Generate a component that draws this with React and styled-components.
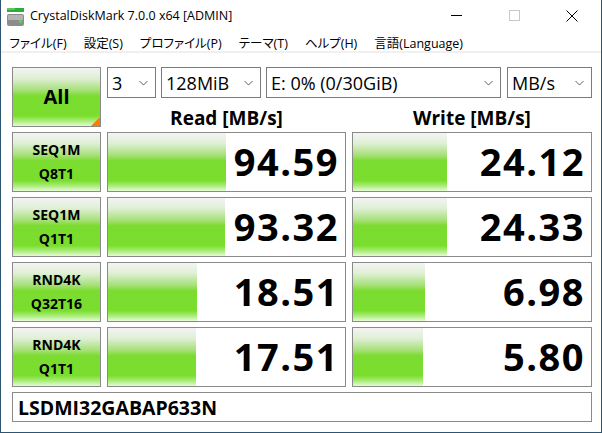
import React from 'react'
import styled, { createGlobalStyle } from 'styled-components'

const GlobalStyle = createGlobalStyle`
    html, body {
        margin:0;
        padding:0;
        background:#ffffff;
        overflow:hidden;
    }
`

const UI = `"Open Sans", "Noto Sans", "Noto Sans CJK JP", sans-serif`

const GREEN = `linear-gradient(to bottom,
    #f4f4f4 0%,
    #dfefd4 18%,
    #a8e07a 38%,
    #7bdc30 48%,
    #7ade2e 82%,
    #a9ec78 91%,
    #e6fad6 100%)`

// Styled Components
const Window = styled.div`
    box-sizing:border-box;
    width:602px;
    height:433px;
    display:flex;
    flex-direction:column;
    background:#ffffff;
    border:1px solid #2b5573;
    border-top:none;
`
const TitleBar = styled.div`
    height:31px;
    display:flex;
    align-items:center;
    padding-left:4px;
    font-family:${UI};
    font-size:12.5px;
    color:#000;
`
const Title = styled.span`
    margin-left:5px;
    flex:1;
`
const Control = styled.div`
    width:58px;
    height:31px;
    display:flex;
    align-items:center;
    justify-content:center;
`
const MenuBar = styled.div`
    box-sizing:border-box;
    height:22px;
    padding-top:3px;
    display:flex;
    align-items:center;
    font-family:${UI};
    font-size:12.5px;
    font-feature-settings:"palt";
    color:#000;
    border-bottom:2px solid #f0f0f0;
`
const MenuItem = styled.span`
    padding:0 8.5px;
`
const Client = styled.div`
    flex:1;
    display:grid;
    grid-template-columns:89px 239px 240px;
    grid-auto-rows:60px;
    column-gap:6px;
    row-gap:5px;
    padding:14px 9px 0 11px;
    font-family:${UI};
`
const GreenButton = styled.div`
    box-sizing:border-box;
    position:relative;
    border:1px solid #8a8a8a;
    background:${GREEN};
    display:flex;
    flex-direction:column;
    align-items:center;
    justify-content:center;
    font-weight:700;
    font-size:${p => p.$big ? 20 : 14}px;
    line-height:${p => p.$big ? 1 : 1.75};
    color:#000;
`
const Corner = styled.span`
    position:absolute;
    right:0;
    bottom:0;
    width:0;
    height:0;
    border-left:9px solid transparent;
    border-bottom:9px solid #ff7a00;
`
const TopRight = styled.div`
    grid-column:2 / 4;
    display:flex;
    flex-direction:column;
`
const Combos = styled.div`
    display:flex;
    height:31px;
`
const Combo = styled.div`
    box-sizing:border-box;
    width:${p => p.$w}px;
    margin-left:${p => p.$gap || 0}px;
    height:31px;
    border:1px solid #7a7a7a;
    background:#fff;
    display:flex;
    align-items:center;
    padding:0 7px 0 4px;
    font-size:18px;
    color:#000;
`
const ComboText = styled.span`
    flex:1;
    white-space:nowrap;
`
const Headers = styled.div`
    flex:1;
    display:grid;
    grid-template-columns:239px 240px;
    column-gap:6px;
`
const Header = styled.div`
    display:flex;
    align-items:flex-end;
    justify-content:center;
    font-weight:700;
    font-size:19px;
    line-height:22px;
    margin-bottom:-2px;
    color:#000;
`
const Cell = styled.div`
    box-sizing:border-box;
    border:1px solid #8a8a8a;
    background-color:#fff;
    background-image:${GREEN};
    background-repeat:no-repeat;
    background-size:${p => p.$fill}px 100%;
    display:flex;
    align-items:center;
    justify-content:flex-end;
    padding:0 6px 3px 0;
    font-weight:700;
    font-size:38px;
    letter-spacing:1.5px;
    color:#000;
`
const Comment = styled.div`
    grid-column:1 / 4;
    box-sizing:border-box;
    height:30px;
    border:1px solid #8a8a8a;
    background:#fff;
    display:flex;
    align-items:center;
    padding-left:5px;
    font-weight:700;
    font-size:19.5px;
    color:#000;
`

const Chevron = () => (
    <svg width="9" height="6" viewBox="0 0 9 6">
        <path d="M0.5 1 L4.5 5 L8.5 1" fill="none" stroke="#606060" strokeWidth="1" />
    </svg>
)

const DriveIcon = () => (
    <svg width="20" height="22" viewBox="0 0 20 22">
        <rect x="2" y="3" width="17" height="4" fill="#2faa3c" />
        <rect x="2" y="3" width="8" height="2" fill="#59c75c" />
        <rect x="2" y="9" width="17" height="12" rx="2" fill="#8c8c8c" />
        <rect x="3" y="10" width="15" height="5" rx="1" fill="#b4b4b4" />
        <rect x="14" y="15" width="3" height="3" fill="#4fd84f" />
    </svg>
)

const menu = ['ファイル(F)', '設定(S)', 'プロファイル(P)', 'テーマ(T)', 'ヘルプ(H)', '言語(Language)']

const results = [
    { top: 'SEQ1M', bottom: 'Q8T1', read: '94.59', write: '24.12', rf: 118, wf: 94 },
    { top: 'SEQ1M', bottom: 'Q1T1', read: '93.32', write: '24.33', rf: 117, wf: 94 },
    { top: 'RND4K', bottom: 'Q32T16', read: '18.51', write: '6.98', rf: 89, wf: 72 },
    { top: 'RND4K', bottom: 'Q1T1', read: '17.51', write: '5.80', rf: 88, wf: 70 }
]

export default () => {
    return (
        <>
            <GlobalStyle />
            <Window>
                <TitleBar>
                    <DriveIcon />
                    <Title>CrystalDiskMark 7.0.0 x64 [ADMIN]</Title>
                    <Control>
                        <svg width="11" height="1"><rect width="11" height="1" fill="#000" /></svg>
                    </Control>
                    <Control>
                        <svg width="11" height="11"><rect x="0.5" y="0.5" width="10" height="10" fill="none" stroke="#c8c8c8" /></svg>
                    </Control>
                    <Control>
                        <svg width="12" height="12"><path d="M0.5 0.5 L11.5 11.5 M11.5 0.5 L0.5 11.5" stroke="#000" strokeWidth="1" /></svg>
                    </Control>
                </TitleBar>
                <MenuBar>
                    {menu.map(m => <MenuItem key={m}>{m}</MenuItem>)}
                </MenuBar>
                <Client>
                    <GreenButton $big>
                        All
                        <Corner />
                    </GreenButton>
                    <TopRight>
                        <Combos>
                            <Combo $w={49}><ComboText>3</ComboText><Chevron /></Combo>
                            <Combo $w={100} $gap={5}><ComboText>128MiB</ComboText><Chevron /></Combo>
                            <Combo $w={235} $gap={5}><ComboText>E: 0% (0/30GiB)</ComboText><Chevron /></Combo>
                            <Combo $w={85} $gap={6}><ComboText>MB/s</ComboText><Chevron /></Combo>
                        </Combos>
                        <Headers>
                            <Header>Read [MB/s]</Header>
                            <Header>Write [MB/s]</Header>
                        </Headers>
                    </TopRight>
                    {results.map((r, index) => (
                        <React.Fragment key={index}>
                            <GreenButton>
                                <span>{r.top}</span>
                                <span>{r.bottom}</span>
                            </GreenButton>
                            <Cell $fill={r.rf}>{r.read}</Cell>
                            <Cell $fill={r.wf}>{r.write}</Cell>
                        </React.Fragment>
                    ))}
                    <Comment>LSDMI32GABAP633N</Comment>
                </Client>
            </Window>
        </>
    )
}
